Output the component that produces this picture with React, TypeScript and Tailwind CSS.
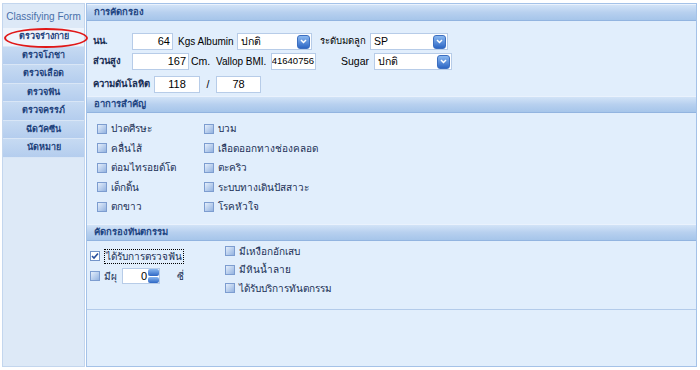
import React from 'react';

const menuItems = ['ตรวจร่างกาย', 'ตรวจโภชา', 'ตรวจเลือด', 'ตรวจฟัน', 'ตรวจครรภ์', 'ฉีดวัคซีน', 'นัดหมาย'];

const symptomsLeft = ['ปวดศีรษะ', 'คลื่นไส้', 'ต่อมไทรอยด์โต', 'เด็กดิ้น', 'ตกขาว'];
const symptomsRight = ['บวม', 'เลือดออกทางช่องคลอด', 'ตะคริว', 'ระบบทางเดินปัสสาวะ', 'โรคหัวใจ'];

function Checkbox({ checked = false }: { checked?: boolean }) {
  if (checked) {
    return (
      <span className="w-[10px] h-[10px] shrink-0 border border-[#7394c9] bg-white flex items-center justify-center">
        <svg width="8" height="8" viewBox="0 0 8 8">
          <path d="M1 4 L3 6 L7 1.5" fill="none" stroke="#274f9c" strokeWidth="1.6" />
        </svg>
      </span>
    );
  }
  return (
    <span className="w-[10px] h-[10px] shrink-0 border border-[#7d9dd0] bg-gradient-to-br from-[#e4eefb] to-[#94b3e0]" />
  );
}

function TextBox({ value, width, align = 'right', small = false }: { value: string; width: string; align?: 'right' | 'center' | 'left'; small?: boolean }) {
  const alignCls = align === 'right' ? 'justify-end' : align === 'center' ? 'justify-center' : 'justify-start';
  return (
    <div className={`${width} h-[17px] bg-white border border-[#b7cce8] flex items-center overflow-hidden whitespace-nowrap ${alignCls} ${small ? 'text-[9.5px] px-[1px]' : 'text-[11px] px-[2px]'} text-black`}>
      <span className="shrink-0">{value}</span>
    </div>
  );
}

function ArrowButton() {
  return (
    <span className="w-[13px] h-[14px] shrink-0 rounded-[3px] bg-gradient-to-b from-[#8ab8f0] to-[#2d66c4] border border-[#3d6fc0] flex items-center justify-center">
      <svg width="7" height="5" viewBox="0 0 7 5">
        <path d="M1 1 L3.5 3.5 L6 1" fill="none" stroke="white" strokeWidth="1.5" />
      </svg>
    </span>
  );
}

function Select({ value, width }: { value: string; width: string }) {
  return (
    <div className={`${width} h-[17px] bg-white border border-[#b7cce8] pl-[3px] pr-[1px] flex items-center justify-between text-[10.5px] text-black`}>
      <span className="truncate">{value}</span>
      <ArrowButton />
    </div>
  );
}

function SectionHeader({ title }: { title: string }) {
  return (
    <div className="h-[17px] shrink-0 bg-gradient-to-b from-[#d2e3f7] via-[#b7d0ef] to-[#a6c5ea] border-t border-t-[#eaf2fd] border-b border-b-[#92b4e0] pl-[7px] flex items-center text-[9.5px] font-bold text-[#1f4582]">
      {title}
    </div>
  );
}

function CheckRow({ label, checked = false }: { label: string; checked?: boolean }) {
  return (
    <div className="h-[19.5px] flex items-center gap-[4px] text-[10px] text-[#1a2f55]">
      <Checkbox checked={checked} />
      <span className="whitespace-nowrap">{label}</span>
    </div>
  );
}

export default function App() {
  return (
    <div className="relative w-[700px] h-[370px] bg-white flex pt-[3px] pl-[2px] gap-[1px] font-['Liberation_Sans',Tahoma,sans-serif] overflow-hidden">
      {/* Sidebar */}
      <div className="w-[83px] h-[364px] bg-[#dde9f7] border border-[#c3d6ee] flex flex-col">
        <div className="h-[24px] flex items-center justify-center text-[10px] text-[#4a70aa] whitespace-nowrap">
          Classifying Form
        </div>
        <div className="flex flex-col">
          {menuItems.map((item, i) => (
            <div
              key={item}
              className={`h-[18.5px] flex items-center justify-center text-[9px] font-bold text-[#1e427c] border-b border-b-[#d9e6f6] ${
                i === 0 ? 'bg-[#eef4fc]' : 'bg-gradient-to-b from-[#c6daf2] to-[#b4cdee]'
              }`}
            >
              {item}
            </div>
          ))}
        </div>
      </div>

      {/* Main panel */}
      <div className="w-[611px] h-[364px] border border-[#a4c2e8] bg-[#e1eefc] flex flex-col">
        <SectionHeader title="การคัดกรอง" />
        <div className="h-[75px] shrink-0 pt-[12px] pl-[6px] flex flex-col text-[10.5px] text-black">
          <div className="h-[17px] flex items-center">
            <span className="w-[39px] text-[9.5px] font-bold text-[#1a2f55]">นน.</span>
            <TextBox value="64" width="w-[41px]" />
            <span className="w-[64px] pl-[5px] text-[10px] whitespace-nowrap">Kgs Albumin</span>
            <Select value="ปกติ" width="w-[75px]" />
            <span className="w-[58px] pr-[4px] text-right text-[9.5px] whitespace-nowrap">ระดับมดลูก</span>
            <Select value="SP" width="w-[78px]" />
          </div>
          <div className="h-[17px] mt-[3px] flex items-center">
            <span className="w-[39px] text-[9.5px] font-bold text-[#1a2f55]">ส่วนสูง</span>
            <TextBox value="167" width="w-[57px]" />
            <span className="w-[27px] pl-[2px]">Cm.</span>
            <span className="w-[55px] text-[10px] whitespace-nowrap">Vallop BMI.</span>
            <TextBox value="²41640756" width="w-[45px]" small />
            <span className="w-[58px] pr-[5px] text-right">Sugar</span>
            <Select value="ปกติ" width="w-[78px]" />
          </div>
          <div className="h-[17px] mt-[6px] flex items-center">
            <span className="w-[61px] text-[9.5px] font-bold text-[#1a2f55] whitespace-nowrap">ความดันโลหิต</span>
            <TextBox value="118" width="w-[46px]" align="center" />
            <span className="w-[16px] text-center">/</span>
            <TextBox value="78" width="w-[45px]" align="center" />
          </div>
        </div>

        <SectionHeader title="อาการสำคัญ" />
        <div className="h-[111px] shrink-0 pt-[6px] pl-[10px] flex">
          <div className="w-[107px] flex flex-col">
            {symptomsLeft.map((s) => (
              <CheckRow key={s} label={s} />
            ))}
          </div>
          <div className="flex flex-col">
            {symptomsRight.map((s) => (
              <CheckRow key={s} label={s} />
            ))}
          </div>
        </div>

        <SectionHeader title="คัดกรองทันตกรรม" />
        <div className="h-[69px] shrink-0 pl-[3px] flex border-b border-b-[#b3cbea]">
          <div className="w-[135px] pt-[6px] flex flex-col text-[10px] text-[#1a2f55]">
            <div className="h-[18px] flex items-center gap-[4px]">
              <Checkbox checked />
              <span className="border border-dotted border-black px-[1px] leading-[13px] whitespace-nowrap">ได้รับการตรวจฟัน</span>
            </div>
            <div className="h-[18px] mt-[2px] flex items-center">
              <Checkbox />
              <span className="w-[22px] pl-[4px]">มีผุ</span>
              <div className="w-[38px] h-[16px] bg-white border border-[#b7cce8] flex items-center justify-end text-[11px] text-black">
                <span className="pr-[1px]">0</span>
                <span className="w-[11px] h-[14px] flex flex-col gap-[1px]">
                  <span className="h-[6.5px] rounded-[2px] bg-gradient-to-b from-[#8ab8f0] to-[#2d66c4]" />
                  <span className="h-[6.5px] rounded-[2px] bg-gradient-to-b from-[#8ab8f0] to-[#2d66c4]" />
                </span>
              </div>
              <span className="pl-[17px]">ซี่</span>
            </div>
          </div>
          <div className="pt-[1px] flex flex-col text-[10px] text-[#1a2f55]">
            {['มีเหงือกอักเสบ', 'มีหินน้ำลาย', 'ได้รับบริการทันตกรรม'].map((s) => (
              <div key={s} className="h-[18.5px] flex items-center gap-[4px]">
                <Checkbox />
                <span className="whitespace-nowrap">{s}</span>
              </div>
            ))}
          </div>
        </div>
        <div className="flex-1" />
      </div>

      {/* Annotation ellipse */}
      <div className="absolute left-[4px] top-[28px] w-[84px] h-[20px] rounded-[50%] border-2 border-[#e01818] pointer-events-none" />
    </div>
  );
}
